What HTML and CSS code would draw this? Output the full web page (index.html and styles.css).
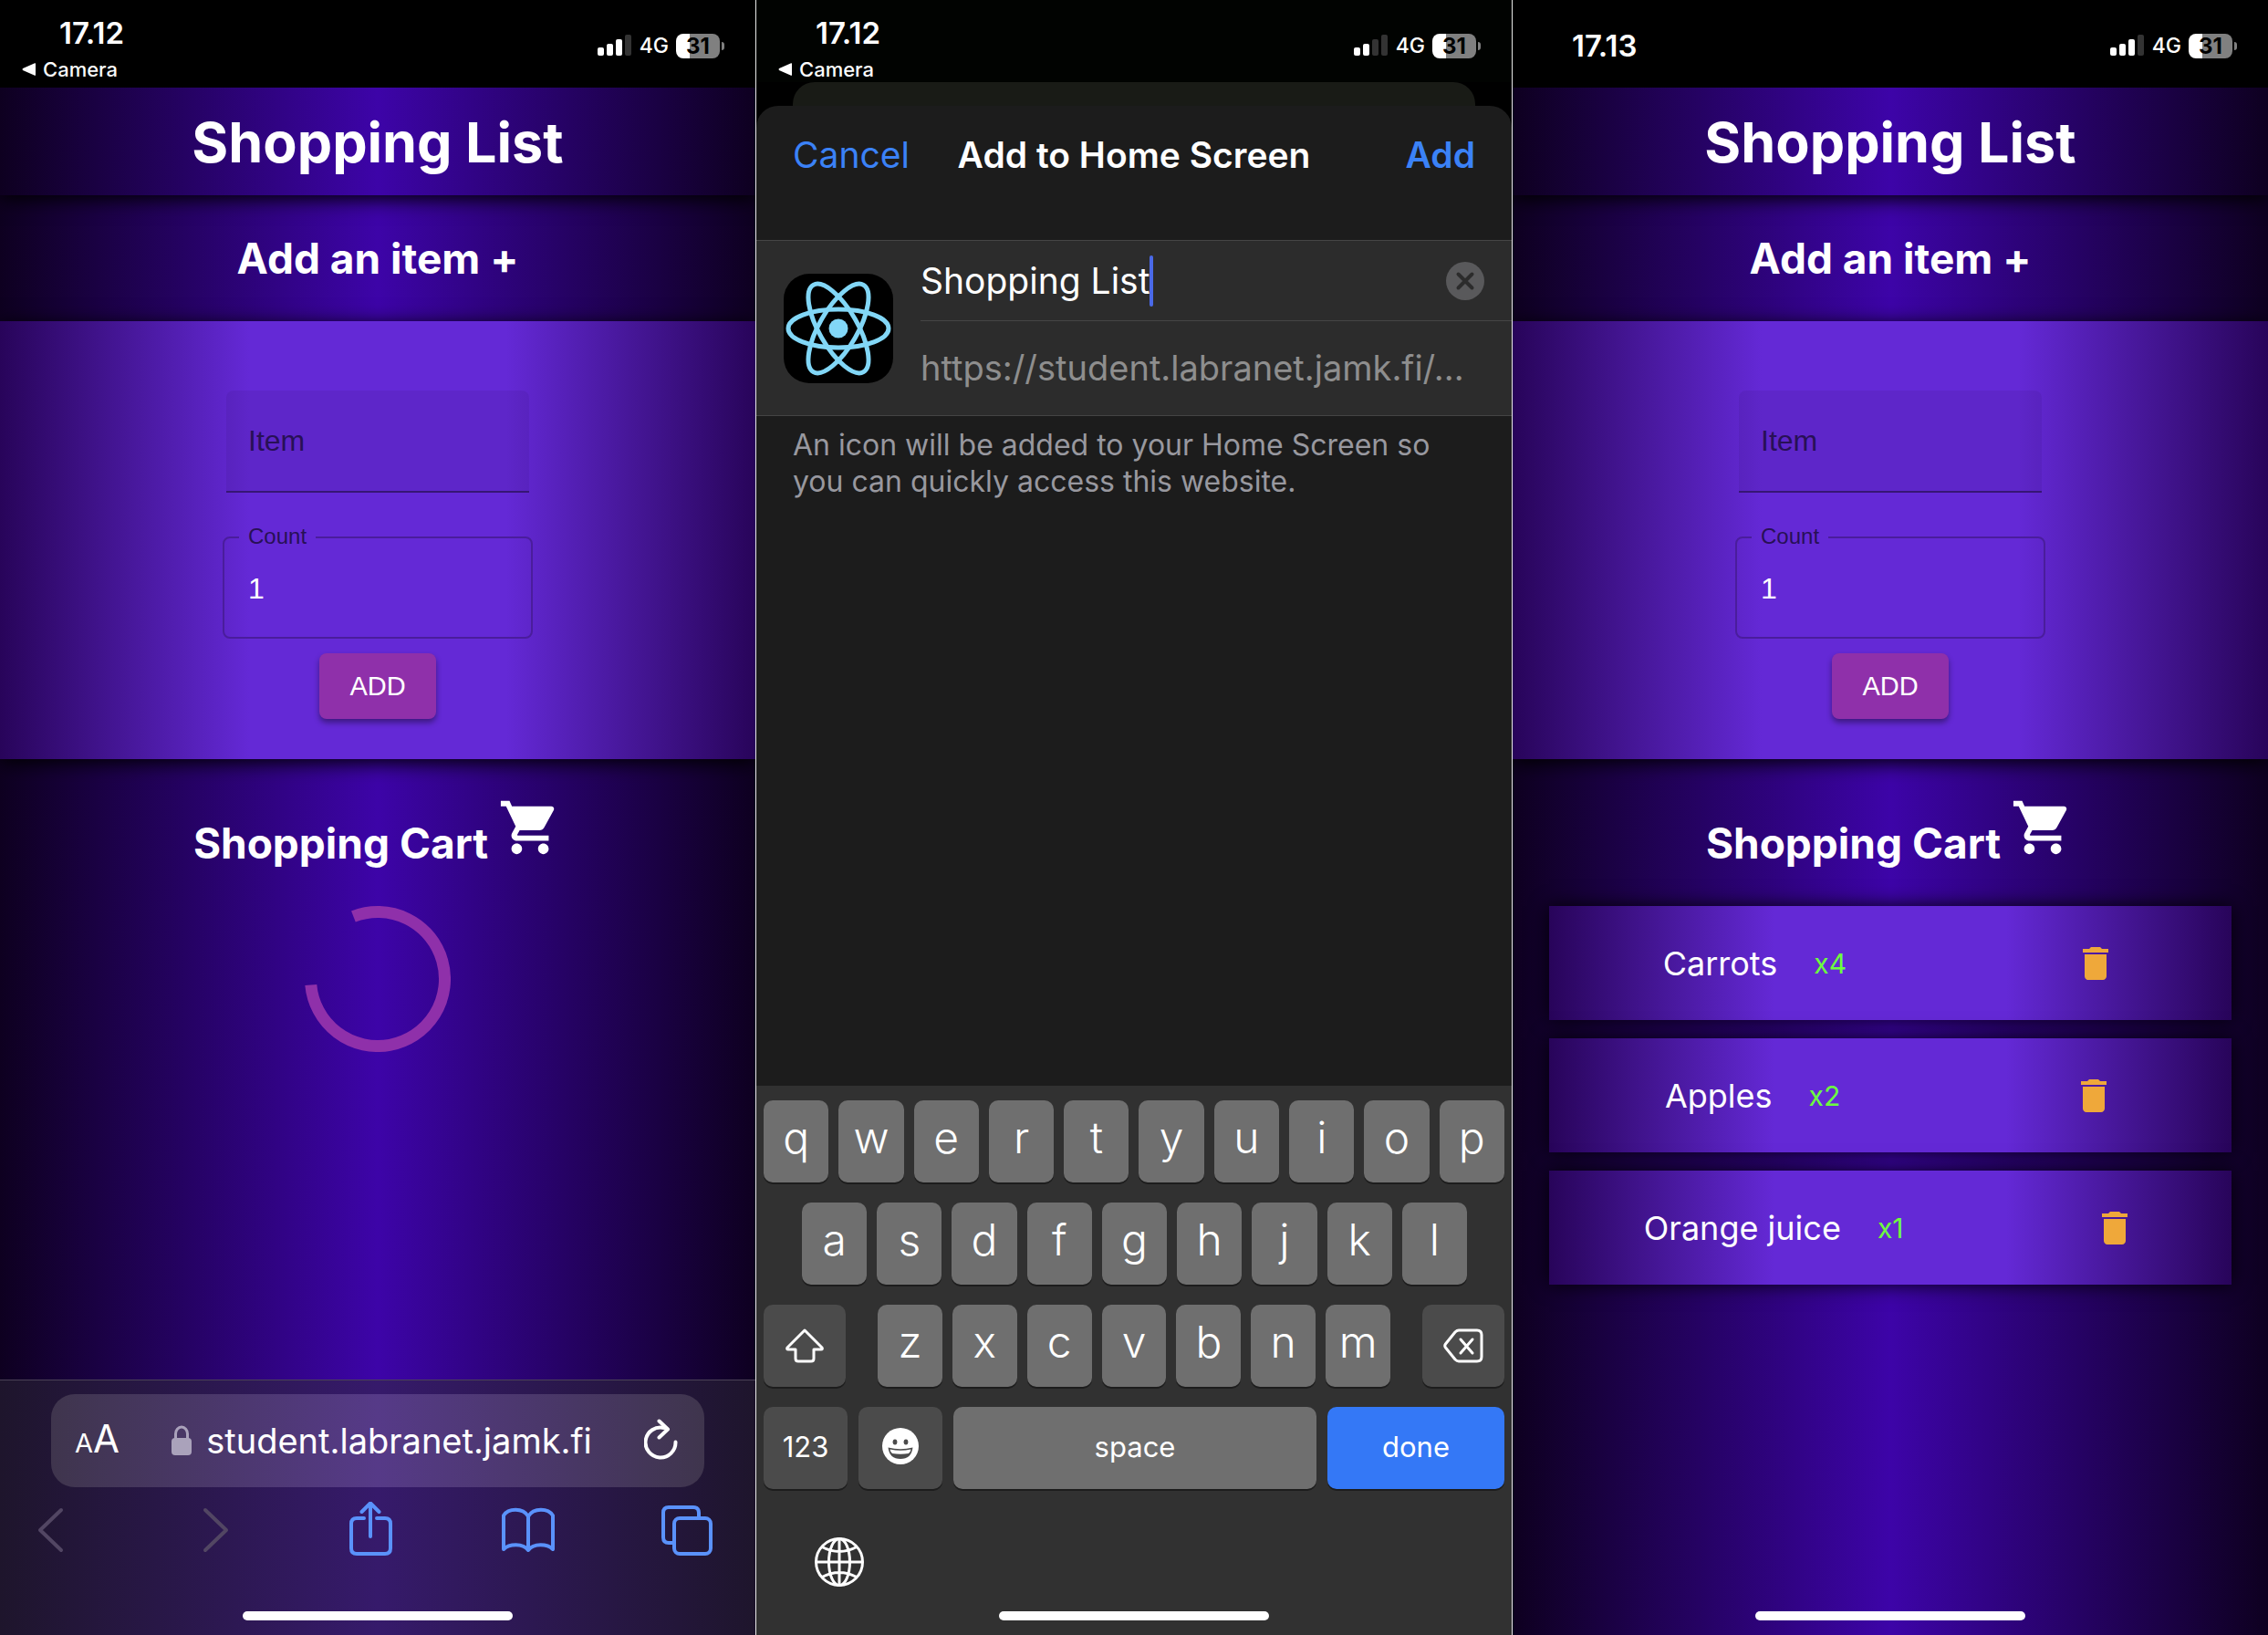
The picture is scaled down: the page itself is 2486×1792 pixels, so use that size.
FILE: index.html
```html
<!DOCTYPE html>
<html lang="en">
<head>
<meta charset="utf-8">
<meta name="viewport" content="width=device-width, initial-scale=1">
<title>Shopping List</title>
<link rel="stylesheet" href="styles.css">
</head>
<body>
<svg class="sprite" aria-hidden="true">
  <symbol id="cart" viewBox="0 0 24 24"><path d="M7 18c-1.1 0-1.99.9-1.99 2S5.9 22 7 22s2-.9 2-2-.9-2-2-2zM1 2v2h2l3.6 7.59-1.35 2.45c-.16.28-.25.61-.25.96 0 1.1.9 2 2 2h12v-2H7.42c-.14 0-.25-.11-.25-.25l.03-.12.9-1.63h7.45c.75 0 1.41-.41 1.75-1.03l3.58-6.49c.08-.14.12-.31.12-.48 0-.55-.45-1-1-1H5.21l-.94-2H1zm16 16c-1.1 0-1.99.9-1.99 2s.89 2 1.99 2 2-.9 2-2-.9-2-2-2z"/></symbol>
  <symbol id="trash" viewBox="0 0 24 24"><path d="M6 19c0 1.1.9 2 2 2h8c1.1 0 2-.9 2-2V7H6v12zM19 4h-3.5l-1-1h-5l-1 1H5v2h14V4z"/></symbol>
  <symbol id="signal" viewBox="0 0 38 24">
    <rect x="0" y="14" width="7" height="9" rx="2"/>
    <rect x="10" y="10" width="7" height="13" rx="2"/>
    <rect class="bar-3" x="20" y="5" width="7" height="18" rx="2"/>
    <rect class="bar-4" x="30" y="0" width="7" height="23" rx="2"/>
  </symbol>
</svg>
<main class="screens">

  <section class="screen screen-app">
    <header class="status">
      <div class="status-left with-link">
        <span class="clock">17.12</span>
        <a class="back-link" href="#"><svg class="back-arrow" viewBox="0 0 15 14"><path d="M15 0.500V13.500Q14.500 14 13.500 13.500L1 8Q0 7 1 6L13.500 0.500Q14.500 0 15 0.500z"/></svg>Camera</a>
      </div>
      <div class="status-right">
        <svg class="signal"><use href="#signal"/></svg><span class="network">4G</span><span class="battery">31</span>
      </div>
    </header>
    <div class="app-title"><h1>Shopping List</h1></div>
    <button class="add-toggle" type="button">Add an item +</button>
    <form class="add-form">
      <div class="filled-field"><label for="item-a">Item</label><input id="item-a" type="text"></div>
      <fieldset class="outlined-field">
        <legend><label for="count-a">Count</label></legend>
        <input id="count-a" type="text" inputmode="numeric" value="1">
      </fieldset>
      <button class="submit" type="button">ADD</button>
    </form>
    <div class="cart">
      <h2>Shopping Cart <svg class="cart-icon"><use href="#cart"/></svg></h2>
      <svg class="spinner" viewBox="0 0 160 160" role="img" aria-label="Loading"><path d="M53.400 11.500A73.500 73.500 0 1 1 6.800 86.500"/></svg>
    </div>
    <footer class="browser">
      <div class="address-bar">
        <button class="text-size" type="button" aria-label="Page settings"><span class="small-a">A</span>A</button>
        <button class="address" type="button"><svg class="lock" viewBox="0 0 22 34"><rect x="0" y="14" width="22" height="19" rx="4"/><path d="M4.500 15V9.500a6.500 7.500 0 0 1 13 0V15" fill="none" stroke="currentColor" stroke-width="3"/></svg>student.labranet.jamk.fi</button>
        <button class="reload" type="button" aria-label="Reload"><svg viewBox="0 0 40 48"><path d="M22 10A16.500 16.500 0 1 0 34.500 25.500"/><path d="M16.500 2.500L26 11.500L16.500 20.500"/></svg></button>
      </div>
      <nav class="toolbar" aria-label="Browser">
        <button type="button" aria-label="Back" disabled><svg viewBox="0 0 60 60"><path d="M41 9L18 31L41 53"/></svg></button>
        <button type="button" aria-label="Forward" disabled><svg viewBox="0 0 60 60"><path d="M25 9L48 31L25 53"/></svg></button>
        <button type="button" aria-label="Share"><svg viewBox="0 0 60 60"><path d="M24 18H16Q10 18 10 24V51Q10 57 16 57H47Q53 57 53 51V24Q53 18 47 18H38"/><path d="M31 38V2M21.500 11L31 1.500L40.500 11"/></svg></button>
        <button type="button" aria-label="Bookmarks"><svg viewBox="0 0 60 60"><path d="M30 16C24 6 8 7 3 15V52C9 46 24 45 30 53C36 45 51 46 57 52V15C52 7 36 6 30 16zV53"/></svg></button>
        <button type="button" aria-label="Tabs"><svg viewBox="0 0 60 60"><rect x="16" y="18" width="40" height="39" rx="6"/><path d="M16 45H10Q4 45 4 39V12Q4 6 10 6H37Q43 6 43 12V18"/></svg></button>
      </nav>
      <div class="home-indicator"></div>
    </footer>
  </section>

  <section class="screen screen-sheet">
    <header class="status">
      <div class="status-left with-link">
        <span class="clock">17.12</span>
        <a class="back-link" href="#"><svg class="back-arrow" viewBox="0 0 15 14"><path d="M15 0.500V13.500Q14.500 14 13.500 13.500L1 8Q0 7 1 6L13.500 0.500Q14.500 0 15 0.500z"/></svg>Camera</a>
      </div>
      <div class="status-right">
        <svg class="signal weak"><use href="#signal"/></svg><span class="network">4G</span><span class="battery">31</span>
      </div>
    </header>
    <div class="card-behind"></div>
    <div class="sheet">
      <div class="sheet-nav">
        <button class="cancel" type="button">Cancel</button>
        <h2>Add to Home Screen</h2>
        <button class="confirm" type="button">Add</button>
      </div>
      <div class="bookmark">
        <svg class="app-icon" viewBox="0 0 120 120">
          <rect width="120" height="120" rx="28"/>
          <g class="orbits"><ellipse cx="60" cy="60" rx="55" ry="21"/><ellipse cx="60" cy="60" rx="55" ry="21" transform="rotate(60 60 60)"/><ellipse cx="60" cy="60" rx="55" ry="21" transform="rotate(120 60 60)"/></g>
          <circle class="nucleus" cx="60" cy="60" r="10.500"/>
        </svg>
        <div class="bookmark-fields">
          <div class="name-row">
            <input class="name-input" type="text" value="Shopping List" aria-label="Name"><span class="caret"></span>
            <button class="clear" type="button" aria-label="Clear"><svg viewBox="0 0 42 42"><circle cx="21" cy="21" r="21"/><path d="M13.500 13.500L28.500 28.500M28.500 13.500L13.500 28.500"/></svg></button>
          </div>
          <div class="url-row">https://student.labranet.jamk.fi/...</div>
        </div>
      </div>
      <p class="note">An icon will be added to your Home Screen so<br>you can quickly access this website.</p>
    </div>
    <div class="keyboard">
      <div class="keys">
        <button>q</button><button>w</button><button>e</button><button>r</button><button>t</button><button>y</button><button>u</button><button>i</button><button>o</button><button>p</button>
      </div>
      <div class="keys keys-home">
        <button>a</button><button>s</button><button>d</button><button>f</button><button>g</button><button>h</button><button>j</button><button>k</button><button>l</button>
      </div>
      <div class="keys-shift">
        <button class="dark" aria-label="Shift"><svg viewBox="0 0 44 38"><path d="M22 2L41 21Q42 23 40 23H32V33Q32 36 29 36H15Q12 36 12 33V23H4Q2 23 3 21z"/></svg></button>
        <div class="keys"><button>z</button><button>x</button><button>c</button><button>v</button><button>b</button><button>n</button><button>m</button></div>
        <button class="dark" aria-label="Delete"><svg viewBox="0 0 44 38"><path d="M17 2H37Q42 2 42 7V31Q42 36 37 36H17Q15 36 13 34L2.500 21Q1 19 2.500 17L13 4Q15 2 17 2z"/><path d="M19 12L32 27M32 12L19 27"/></svg></button>
      </div>
      <div class="keys-bottom">
        <button class="dark">123</button>
        <button class="dark" aria-label="Emoji"><svg class="emoji" viewBox="0 0 40 40"><circle cx="20" cy="20" r="20"/><ellipse class="cut" cx="14" cy="15.500" rx="2.400" ry="3"/><ellipse class="cut" cx="26" cy="15.500" rx="2.400" ry="3"/><path class="cut" d="M6.500 21.500Q20 25 33.500 21.500Q32 34 20 34Q8 34 6.500 21.500z"/><path d="M8.500 23.500Q20 26 31.500 23.500Q31 27 29 28Q20 29.500 11 28Q9 27 8.500 23.500z"/></svg></button>
        <button>space</button>
        <button class="done">done</button>
      </div>
      <button class="globe" aria-label="Next keyboard"><svg viewBox="0 0 54 54"><circle cx="27" cy="27" r="25.500"/><ellipse cx="27" cy="27" rx="11.500" ry="25.500"/><path d="M27 1.500V52.500M1.500 27H52.500M8 10.500Q27 20.500 46 10.500M8 43.500Q27 33.500 46 43.500"/></svg></button>
      <div class="home-indicator"></div>
    </div>
  </section>

  <section class="screen screen-app">
    <header class="status">
      <div class="status-left">
        <span class="clock">17.13</span>
      </div>
      <div class="status-right">
        <svg class="signal"><use href="#signal"/></svg><span class="network">4G</span><span class="battery">31</span>
      </div>
    </header>
    <div class="app-title"><h1>Shopping List</h1></div>
    <button class="add-toggle" type="button">Add an item +</button>
    <form class="add-form">
      <div class="filled-field"><label for="item-b">Item</label><input id="item-b" type="text"></div>
      <fieldset class="outlined-field">
        <legend><label for="count-b">Count</label></legend>
        <input id="count-b" type="text" inputmode="numeric" value="1">
      </fieldset>
      <button class="submit" type="button">ADD</button>
    </form>
    <div class="cart">
      <h2>Shopping Cart <svg class="cart-icon"><use href="#cart"/></svg></h2>
      <ul class="items">
        <li><div class="item-text">Carrots<span class="qty">x4</span></div><button type="button" aria-label="Remove"><svg><use href="#trash"/></svg></button></li>
        <li><div class="item-text">Apples<span class="qty">x2</span></div><button type="button" aria-label="Remove"><svg><use href="#trash"/></svg></button></li>
        <li><div class="item-text">Orange juice<span class="qty">x1</span></div><button type="button" aria-label="Remove"><svg><use href="#trash"/></svg></button></li>
      </ul>
    </div>
    <div class="home-indicator"></div>
  </section>

</main>
</body>
</html>
```
FILE: styles.css
```css
* { box-sizing: border-box; }

body {
  margin: 0;
  font-family: Inter, "Liberation Sans", sans-serif;
  color: #fff;
  background: #000;
}

h1, h2, p, ul { margin: 0; padding: 0; }

button, input {
  font: inherit;
  color: inherit;
  background: none;
  border: 0;
  padding: 0;
  margin: 0;
  min-width: 0;
  outline: 0;
}

svg { display: block; fill: currentColor; }

.sprite { position: absolute; width: 0; height: 0; }

.screens {
  display: grid;
  grid-template-columns: repeat(3, 1fr);
  gap: 1px;
  min-height: 100vh;
  background: #e8e8e8;
}

.screen {
  display: flex;
  flex-direction: column;
  min-width: 0;
  overflow: hidden;
}

.screen-app { background: linear-gradient(90deg, #0e0020, #3d04a8 50%, #0e0020); }
.screen-sheet { background: #000; }

/* Status bar */
.status {
  display: flex;
  justify-content: space-between;
  align-items: center;
  height: 96px;
  padding: 4px 32px 0 24px;
  background: #000;
}

.status-left { display: flex; flex-direction: column; }
.with-link { align-self: flex-end; padding-bottom: 6px; }

.clock {
  padding-left: 41px;
  font-size: 33px;
  line-height: 40px;
  font-weight: 600;
}

.back-link {
  display: flex;
  align-items: center;
  gap: 8px;
  margin-top: 6px;
  font-size: 22px;
  line-height: 28px;
  font-weight: 500;
  color: inherit;
  text-decoration: none;
}

.back-arrow { width: 15px; height: 14px; }
.status-right { display: flex; align-items: center; gap: 8px; }
.signal { --bar-3: #fff; width: 38px; height: 24px; }
.signal.weak { --bar-3: #333; }
.bar-3 { fill: var(--bar-3); }
.bar-4 { fill: #333; }
.network { font-size: 23px; line-height: 28px; font-weight: 500; }

.battery {
  position: relative;
  width: 48px;
  height: 27px;
  margin-right: 7px;
  border-radius: 8px;
  background: linear-gradient(90deg, #fff 31%, #808080 31%);
  color: #000;
  font-size: 24px;
  line-height: 27px;
  font-weight: 700;
  text-align: center;
}

.battery::after {
  content: "";
  position: absolute;
  left: 50px;
  top: 9px;
  width: 3px;
  height: 9px;
  border-radius: 0 4px 4px 0;
  background: #808080;
}

/* Shopping list app */
.app-title, .add-form { position: relative; z-index: 1; }

.app-title {
  height: 118px;
  background: linear-gradient(90deg, #0e0020, #3d04a8 50%, #0e0020);
  box-shadow: 0 4px 20px #000;
  text-align: center;
}

.app-title h1 { font-size: 61px; line-height: 120px; font-weight: 700; }

.add-toggle {
  height: 138px;
  font-size: 46px;
  font-weight: 700;
}

.add-form {
  display: flex;
  flex-direction: column;
  align-items: center;
  padding: 76px 0 44px;
  background: linear-gradient(90deg, #28045a, #6429d6 33%, #6429d6 67%, #28045a);
  box-shadow: 0 4px 20px #000;
  font-family: "Liberation Sans", Arial, sans-serif;
}

.filled-field {
  display: flex;
  align-items: center;
  width: 332px;
  height: 112px;
  margin-bottom: 36px;
  padding-left: 24px;
  border-bottom: 2px solid #371675;
  border-radius: 8px 8px 0 0;
  background: rgba(0, 0, 0, 0.06);
}

.filled-field label { font-size: 32px; color: #281056; }
.filled-field input { flex: 1; height: 100%; }

.outlined-field {
  width: 340px;
  height: 124px;
  margin: 0 0 16px;
  padding: 0 16px;
  border: 2px solid #4a1d9c;
  border-radius: 8px;
}

.outlined-field legend {
  height: 26px;
  padding: 0 10px;
  font-size: 24px;
  line-height: 24px;
  color: #281056;
}

.outlined-field input {
  width: 100%;
  height: 86px;
  padding-left: 10px;
  font-size: 32px;
}

.submit {
  width: 128px;
  height: 72px;
  border-radius: 8px;
  background: #8f30aa;
  box-shadow: 0 4px 6px rgba(0, 0, 0, 0.4);
  font-size: 29px;
}

.cart { flex: 1; }

.cart h2 {
  display: flex;
  justify-content: center;
  gap: 11px;
  height: 161px;
  padding-top: 40px;
  font-size: 46px;
  line-height: 104px;
  font-weight: 700;
}

.cart-icon { width: 70px; height: 70px; }

.spinner { width: 160px; height: 160px; margin: 0 auto; }
.spinner path { fill: none; stroke: #8f30aa; stroke-width: 13; }

.items {
  display: flex;
  flex-direction: column;
  gap: 20px;
  padding: 0 40px;
  list-style: none;
}

.items li {
  display: flex;
  justify-content: space-around;
  align-items: center;
  height: 125px;
  background: linear-gradient(90deg, #28045a, #6429d6 33%, #6429d6 67%, #28045a);
  box-shadow: 0 0 20px rgba(0, 0, 0, 0.9);
}

.item-text { display: flex; align-items: center; gap: 40px; font-size: 36px; line-height: 44px; }
.qty { font-size: 30px; color: #6dff3f; }
.items svg { width: 48px; height: 48px; color: #efa83a; }

/* Browser chrome */
.browser {
  display: flex;
  flex-direction: column;
  height: 280px;
  padding-top: 15px;
  border-top: 1px solid #4b4257;
  background: linear-gradient(90deg, #1e152c, #361a6b 50%, #1e152c);
}

.address-bar {
  display: flex;
  justify-content: space-between;
  align-items: center;
  height: 102px;
  margin: 0 56px;
  padding: 0 26px;
  border-radius: 26px;
  background: linear-gradient(90deg, #3f354d, #563a88 50%, #3f354d);
}

.text-size { font-size: 42px; line-height: 48px; }
.small-a { font-size: 29px; }
.address { display: flex; align-items: center; gap: 16px; font-size: 38px; }
.lock { width: 22px; height: 34px; color: #aaa2bb; }
.reload svg { width: 40px; height: 48px; fill: none; stroke: #fff; stroke-width: 4; stroke-linecap: round; stroke-linejoin: round; }

.toolbar { display: flex; justify-content: space-between; padding: 16px 45px 0 26px; }
.toolbar svg { width: 60px; height: 60px; fill: none; stroke: #5a92fb; stroke-width: 4; stroke-linecap: round; stroke-linejoin: round; }
.toolbar button:disabled svg { stroke: #524663; }

.home-indicator {
  width: 296px;
  height: 10px;
  margin: auto auto 16px;
  border-radius: 5px;
  background: #fff;
}

/* Add to Home Screen sheet */
.screen-sheet .status { height: 90px; padding-top: 10px; background: #010301; }
.screen-sheet .with-link { padding-bottom: 0; }

.card-behind {
  height: 26px;
  margin: 0 40px;
  border-radius: 24px 24px 0 0;
  background: #191b16;
}

.sheet {
  flex: 1;
  border-radius: 24px 24px 0 0;
  background: #1c1c1c;
}

.sheet-nav {
  display: grid;
  grid-template-columns: 1fr auto 1fr;
  align-items: center;
  padding: 29px 40px 68px;
  font-size: 39px;
  line-height: 50px;
}

.sheet-nav h2 { font: inherit; font-weight: 600; }
.cancel { justify-self: start; color: #3b82f7; }
.confirm { justify-self: end; color: #3b82f7; font-weight: 600; }

.bookmark {
  display: flex;
  align-items: center;
  gap: 30px;
  padding-left: 30px;
  border-top: 1px solid #454545;
  border-bottom: 1px solid #454545;
  background: #2c2c2c;
  font-size: 38px;
}

.app-icon { flex: none; width: 120px; height: 120px; fill: #000; }
.orbits { fill: none; stroke: #82d7f7; stroke-width: 5; }
.nucleus { fill: #82d7f7; }
.bookmark-fields { flex: 1; min-width: 0; }
.name-row { display: flex; align-items: center; height: 88px; padding-right: 30px; border-bottom: 1px solid #454545; }
.name-input { field-sizing: content; height: 56px; font-size: 39px; }
.caret { width: 4px; height: 56px; border-radius: 2px; background: #4a69e8; }
.clear { margin-left: auto; }
.clear svg { width: 42px; height: 42px; fill: #59595b; }
.clear path { fill: none; stroke: #2c2c2c; stroke-width: 4; stroke-linecap: round; }
.url-row { height: 103px; line-height: 103px; color: #8e8e8e; white-space: nowrap; }

.note {
  padding: 12px 40px;
  font-size: 32px;
  line-height: 40px;
  color: #98989f;
}

/* Keyboard */
.keyboard {
  display: flex;
  flex-direction: column;
  gap: 22px;
  height: 602px;
  padding: 16px 8px 0;
  background: #313131;
}

.keys { display: flex; gap: 11px; }
.keys button { flex: 1; font-size: 48px; font-weight: 300; padding-bottom: 10px; }
.keys-home { padding: 0 41px 0 42px; }
.keys-shift { display: grid; grid-template-columns: 90px 1fr 90px; gap: 35px; }
.keys-bottom { display: grid; grid-template-columns: 92px 92px 1fr 194px; gap: 12px; }

.keyboard button:not(.globe) {
  display: flex;
  align-items: center;
  justify-content: center;
  height: 90px;
  border-radius: 10px;
  background: #6f6f6f;
  box-shadow: 0 2px 0 #1d1d1d;
}

.keyboard .keys-bottom button { padding-bottom: 4px; font-size: 31px; }
.keyboard button.dark { background: #4b4b4b; }
.keyboard button.done { background: #3478f6; }
.dark svg { width: 44px; height: 38px; fill: none; stroke: #fff; stroke-width: 3; stroke-linecap: round; stroke-linejoin: round; }
.dark .emoji { width: 40px; height: 40px; fill: #fff; stroke: none; }
.emoji .cut { fill: #4b4b4b; }
.globe { align-self: flex-start; margin: 31px 0 0 56px; }
.globe svg { width: 54px; height: 54px; fill: none; stroke: #fff; stroke-width: 3; }
.keyboard .home-indicator { margin-top: auto; }
```
